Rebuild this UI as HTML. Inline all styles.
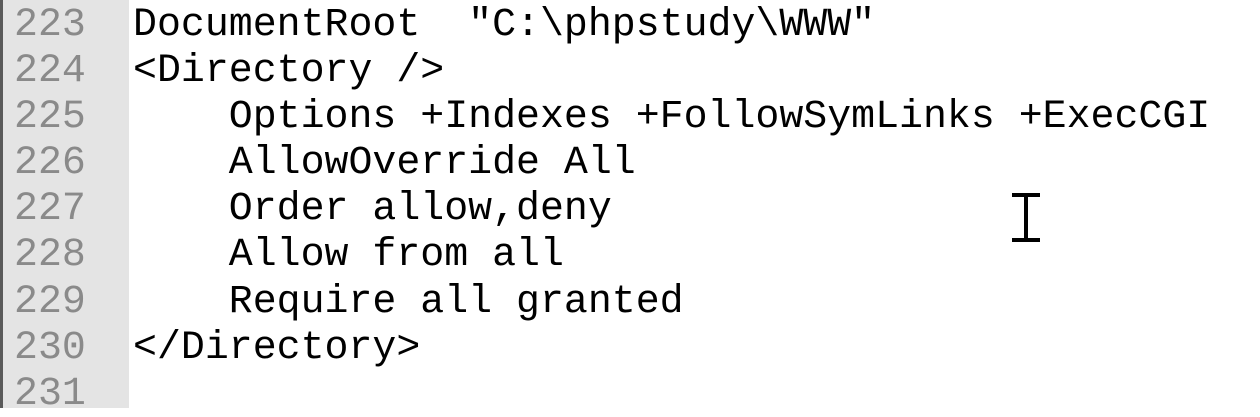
<!DOCTYPE html>
<html><head><style>
html,body{margin:0;padding:0;width:1260px;height:408px;overflow:hidden;background:#fff;}
.g{position:absolute;left:0;top:0;width:129px;height:408px;background:#e4e4e4;border-left:3px solid #5a5a5a;box-sizing:border-box;}
.n,.c{position:absolute;top:2px;font-family:"Liberation Mono","Courier New",monospace;font-size:39.9px;line-height:46.1px;white-space:pre;}
.n{left:14px;color:#8a8a8a;}
.c{left:133px;color:#000;}
.cur{position:absolute;background:#000;}
</style></head><body>
<div class="g"></div>
<div class="n">223
224
225
226
227
228
229
230
231</div>
<div class="c">DocumentRoot  "C:\phpstudy\WWW"
&lt;Directory /&gt;
    Options +Indexes +FollowSymLinks +ExecCGI
    AllowOverride All
    Order allow,deny
    Allow from all
    Require all granted
&lt;/Directory&gt;
</div>
<div class="cur" style="left:1012px;top:193px;width:28px;height:4px"></div>
<div class="cur" style="left:1024px;top:193px;width:4px;height:49px"></div>
<div class="cur" style="left:1012px;top:238px;width:28px;height:4px"></div>
</body></html>
